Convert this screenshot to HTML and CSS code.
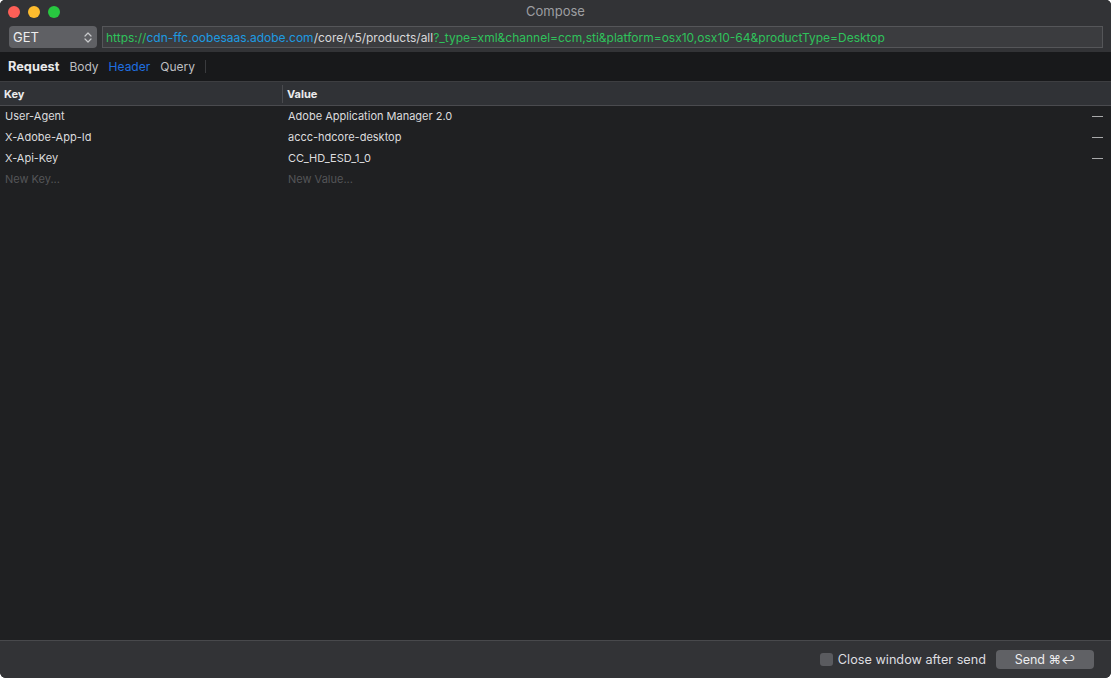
FILE: index.html
```html
<!DOCTYPE html>
<html lang="en">
<head>
  <meta charset="UTF-8">
  <title>Compose</title>
  <link rel="stylesheet" href="styles.css">
</head>
<body>
<div class="window">
  <div class="topbar">
    <div class="titlebar">
      <div class="lights">
        <span class="light red"></span>
        <span class="light yellow"></span>
        <span class="light green"></span>
      </div>
      <div class="title">Compose</div>
    </div>
    <div class="toolbar">
      <div class="method">
        <span>GET</span>
        <svg class="updown" width="8" height="13" viewBox="0 0 8 13">
          <path d="M1 5 L4 2 L7 5 M1 8 L4 11 L7 8" fill="none" stroke="#c9cacc" stroke-width="1.2" stroke-linecap="round" stroke-linejoin="round"/>
        </svg>
      </div>
      <div class="url"><span class="u-scheme">https://</span><span class="u-host">cdn-ffc.oobesaas.adobe.com</span><span class="u-path">/core/v5/products/all</span><span class="u-query">?_type=xml&amp;channel=ccm,sti&amp;platform=osx10,osx10-64&amp;productType=Desktop</span></div>
    </div>
  </div>

  <div class="tabs">
    <span class="tab tab-main">Request</span>
    <span class="tab">Body</span>
    <span class="tab active">Header</span>
    <span class="tab">Query</span>
    <span class="tab-sep"></span>
  </div>

  <div class="table">
    <div class="thead">
      <div class="col-key">Key</div>
      <div class="col-val">Value</div>
    </div>
    <div class="row">
      <div class="col-key">User-Agent</div>
      <div class="col-val">Adobe Application Manager 2.0</div>
      <div class="remove"></div>
    </div>
    <div class="row">
      <div class="col-key">X-Adobe-App-Id</div>
      <div class="col-val">accc-hdcore-desktop</div>
      <div class="remove"></div>
    </div>
    <div class="row">
      <div class="col-key">X-Api-Key</div>
      <div class="col-val">CC_HD_ESD_1_0</div>
      <div class="remove"></div>
    </div>
    <div class="row placeholder">
      <div class="col-key">New Key...</div>
      <div class="col-val">New Value...</div>
    </div>
  </div>

  <div class="footer">
    <label class="check"><span class="box"></span>Close window after send</label>
    <button class="send">Send ⌘↩</button>
  </div>
</div>
</body>
</html>
```

FILE: styles.css
```css
html, body {
  margin: 0;
  padding: 0;
  width: 100%;
  height: 100%;
  background: #fff;
  font-family: Inter, "Noto Sans", Arial, sans-serif;
}
.window {
  width: 1111px;
  height: 678px;
  display: flex;
  flex-direction: column;
  background: #1f2022;
  border-radius: 5px 5px 6px 6px;
  overflow: hidden;
}
.topbar {
  height: 52px;
  background: #323336;
  display: flex;
  flex-direction: column;
}
.titlebar {
  height: 24px;
  display: flex;
  align-items: center;
  position: relative;
}
.lights {
  display: flex;
  gap: 8px;
  padding-left: 8px;
}
.light {
  width: 12px;
  height: 12px;
  border-radius: 50%;
}
.red { background: #fe5f57; }
.yellow { background: #febc2e; }
.green { background: #28c840; }
.title {
  position: absolute;
  left: 0;
  right: 0;
  top: 3px;
  text-align: center;
  font-size: 13px;
  color: #9d9ea1;
}
.toolbar {
  display: flex;
  align-items: center;
  gap: 5px;
  padding: 2px 8px 0 9px;
}
.method {
  width: 88px;
  height: 22px;
  box-sizing: border-box;
  background: #5f6064;
  border-radius: 4px;
  display: flex;
  align-items: center;
  justify-content: space-between;
  padding: 0 5px 0 4px;
  font-size: 13px;
  color: #eeeeef;
}
.url {
  flex: 1;
  height: 22px;
  box-sizing: border-box;
  background: #3b3c3f;
  border: 1px solid #555659;
  display: flex;
  align-items: center;
  padding-left: 3px;
  font-size: 12px;
  white-space: nowrap;
  overflow: hidden;
}
.u-scheme, .u-query { color: #2fc25b; }
.u-host { color: #1d9be2; }
.u-path { color: #d8d8da; }

.tabs {
  height: 30px;
  background: #18191b;
  display: flex;
  align-items: center;
  gap: 10px;
  padding-left: 8px;
  font-size: 12px;
  border-bottom: 1px solid #3d3e41;
  box-sizing: border-box;
}
.tab { color: #bdbec0; }
.tab-main {
  color: #e8e8ea;
  font-weight: 700;
  font-size: 12.8px;
}
.tab.active { color: #1f6fe0; }
.tab-sep {
  width: 1px;
  height: 13px;
  background: #3a3b3e;
}

.table {
  flex: 1;
  font-size: 11px;
  color: #dcdcde;
}
.thead {
  height: 24px;
  background: #303236;
  border-bottom: 1px solid #4a4b4f;
  box-sizing: border-box;
  display: flex;
  align-items: center;
  font-weight: 700;
  color: #ebebed;
}
.thead .col-key {
  width: 278px;
  padding-left: 4px;
  border-right: 1px solid #4a4b4f;
  height: 18px;
  line-height: 18px;
}
.thead .col-val {
  padding-left: 4px;
}
.row {
  height: 21px;
  display: flex;
  align-items: center;
  padding-bottom: 1px;
  box-sizing: border-box;
}
.row .col-key {
  width: 283px;
  padding-left: 5px;
  box-sizing: border-box;
}
.row .col-val {
  flex: 1;
  padding-left: 5px;
}
.remove {
  width: 11px;
  height: 1px;
  background: #a8a9ab;
  margin-right: 8px;
}
.placeholder { color: #545558; }

.footer {
  height: 38px;
  background: #323336;
  border-top: 1px solid #48494c;
  box-sizing: border-box;
  display: flex;
  align-items: center;
  justify-content: flex-end;
  padding: 0 17px 1px 0;
  gap: 10px;
}
.check {
  display: flex;
  align-items: center;
  gap: 5px;
  font-size: 12.7px;
  color: #dedee0;
}
.box {
  width: 13px;
  height: 13px;
  border-radius: 3px;
  background: #5a5b5f;
}
.send {
  width: 98px;
  height: 19px;
  border: none;
  border-radius: 4px;
  background: #606165;
  color: #ececee;
  font-family: inherit;
  font-size: 12.5px;
  padding: 0;
}
```
